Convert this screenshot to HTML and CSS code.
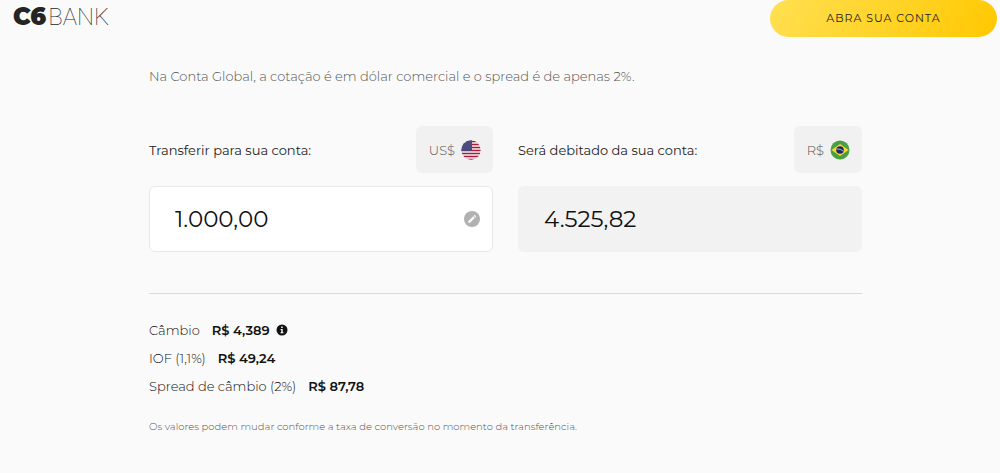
FILE: index.html
```html
<!DOCTYPE html>
<html lang="pt-BR">
<head>
<meta charset="utf-8">
<meta name="viewport" content="width=device-width, initial-scale=1">
<title>C6 Bank - Conta Global</title>
<link rel="stylesheet" href="styles.css">
</head>
<body>
<header class="topbar">
  <a class="logo" href="#"><span class="logo-mark">C6</span><span class="logo-name">BANK</span></a>
  <button class="cta" type="button">ABRA SUA CONTA</button>
</header>
<main class="simulator">
  <p class="intro">Na Conta Global, a cotação é em dólar comercial e o spread é de apenas 2%.</p>
  <form class="fields">
    <div class="field">
      <div class="field-head">
        <label class="field-label" for="send">Transferir para sua conta:</label>
        <button class="currency" type="button">US$
          <svg class="flag" viewBox="0 0 20 20" aria-hidden="true">
            <defs><clipPath id="round"><circle cx="10" cy="10" r="9.700"/></clipPath></defs>
            <g clip-path="url(#round)">
              <path fill="#f5f2f3" d="M0 0h20v20H0z"/>
              <path stroke="#a81c3a" stroke-width="1.300" d="M0 1.500h20M0 4.500h20M0 7.500h20M0 10.500h20M0 13.500h20M0 16.500h20M0 19.300h20"/>
              <path fill="#48487c" d="M0 0h11v11H0z"/>
              <path stroke="#77779f" stroke-width=".6" stroke-dasharray=".7 1.300" d="M1 2h10M2 4h9M1 6h10M2 8h9"/>
            </g>
          </svg>
        </button>
      </div>
      <div class="input-box">
        <input class="amount" id="send" type="text" inputmode="decimal" value="1.000,00">
        <svg class="edit" viewBox="0 0 16 16" aria-hidden="true">
          <circle cx="8" cy="8" r="8" fill="#b1b1b1"/>
          <path fill="#fff" d="M4.300 10.200 9.200 5.300l1.600 1.600-4.900 4.900H4.300zM9.700 4.800l.6-.6q.4-.3.8 0l.8.8q.3.400 0 .8l-.6.6z"/>
        </svg>
      </div>
    </div>
    <div class="field">
      <div class="field-head">
        <label class="field-label" for="debit">Será debitado da sua conta:</label>
        <button class="currency" type="button">R$
          <svg class="flag" viewBox="0 0 20 20" aria-hidden="true">
            <circle cx="10" cy="10" r="9.500" fill="#48a041"/>
            <path fill="#fbd62f" d="M10 4 18.500 10 10 16 1.500 10z"/>
            <circle cx="10" cy="10" r="3.800" fill="#1e2a68"/>
            <path fill="none" stroke="#c9d3e0" stroke-width=".8" d="M6.500 9q3.800-.6 6.900 2.200"/>
          </svg>
        </button>
      </div>
      <div class="input-box input-box-readonly">
        <input class="amount" id="debit" type="text" value="4.525,82" readonly>
      </div>
    </div>
  </form>
  <dl class="costs">
    <div class="cost"><dt>Câmbio</dt><dd>R$ 4,389</dd>
      <svg class="info" viewBox="0 0 12 12" aria-hidden="true">
        <circle cx="6" cy="6" r="5.500" fill="#121212"/>
        <path fill="#fff" d="M5.200 2.500h1.500V4H5.200zM4.600 5h2.100v3.200h.8v1H4.500v-1h.8V6h-.7z"/>
      </svg>
    </div>
    <div class="cost"><dt>IOF (1,1%)</dt><dd>R$ 49,24</dd></div>
    <div class="cost"><dt>Spread de câmbio (2%)</dt><dd>R$ 87,78</dd></div>
  </dl>
  <p class="note">Os valores podem mudar conforme a taxa de conversão no momento da transferência.</p>
</main>
</body>
</html>
```

FILE: styles.css
```css
* { box-sizing: border-box; }

body {
  margin: 0;
  background: #fafafa;
  color: #242424;
  font: 300 13px/20px Montserrat, Inter, sans-serif;
}

button, input { font: inherit; color: inherit; }
p, dl, dd { margin: 0; }

.topbar {
  display: flex;
  justify-content: space-between;
  align-items: flex-start;
  padding: 0 3px 0 13px;
}

.logo {
  display: flex;
  gap: 2px;
  padding-top: 5px;
  color: #242424;
  font-size: 24px;
  line-height: 24px;
  text-decoration: none;
}
.logo-mark { font-weight: 900; }
.logo-name { font-family: Roboto, sans-serif; font-weight: 100; }

.cta {
  width: 227px;
  padding: 8px 0 9px;
  border: 0;
  border-radius: 20px;
  background: linear-gradient(120deg, #ffe052, #ffc800);
  font-size: 11px;
  font-weight: 400;
  letter-spacing: 1px;
}

.simulator { padding: 29px 138px 32px 149px; }

.intro { color: #555; }

.fields {
  display: grid;
  grid-template-columns: repeat(2, minmax(0, 1fr));
  gap: 25px;
  padding: 40px 0 41px;
  border-bottom: 1px solid #d9d9d9;
}

.field-head {
  display: flex;
  justify-content: space-between;
  align-items: center;
  margin-bottom: 13px;
}
.field-label { font-weight: 400; }

.currency {
  display: flex;
  align-items: center;
  gap: 6px;
  height: 47px;
  padding: 0 12px 0 13px;
  border: 0;
  border-radius: 6px;
  background: #f1f1f1;
  color: #555;
}
.flag { width: 20px; height: 20px; }

.input-box {
  display: flex;
  align-items: center;
  height: 66px;
  padding: 0 12px 0 25px;
  border: 1px solid #e8e8e8;
  border-radius: 6px;
  background: #fff;
}
.input-box-readonly { border-color: #f2f2f2; background: #f2f2f2; }

.amount {
  flex: 1;
  min-width: 0;
  padding: 0;
  border: 0;
  outline: 0;
  background: none;
  color: #111;
  font-size: 23px;
  font-weight: 400;
}
.edit { width: 16px; height: 16px; }

.costs { padding-top: 22px; }
.cost { display: flex; align-items: center; height: 28px; }
.cost dt { color: #111; }
.cost dd { margin-left: 12px; color: #121212; font-weight: 600; }
.info { width: 12px; height: 12px; margin-left: 6px; }

.note {
  padding-top: 17px;
  color: #555;
  font-size: 10px;
}
```
